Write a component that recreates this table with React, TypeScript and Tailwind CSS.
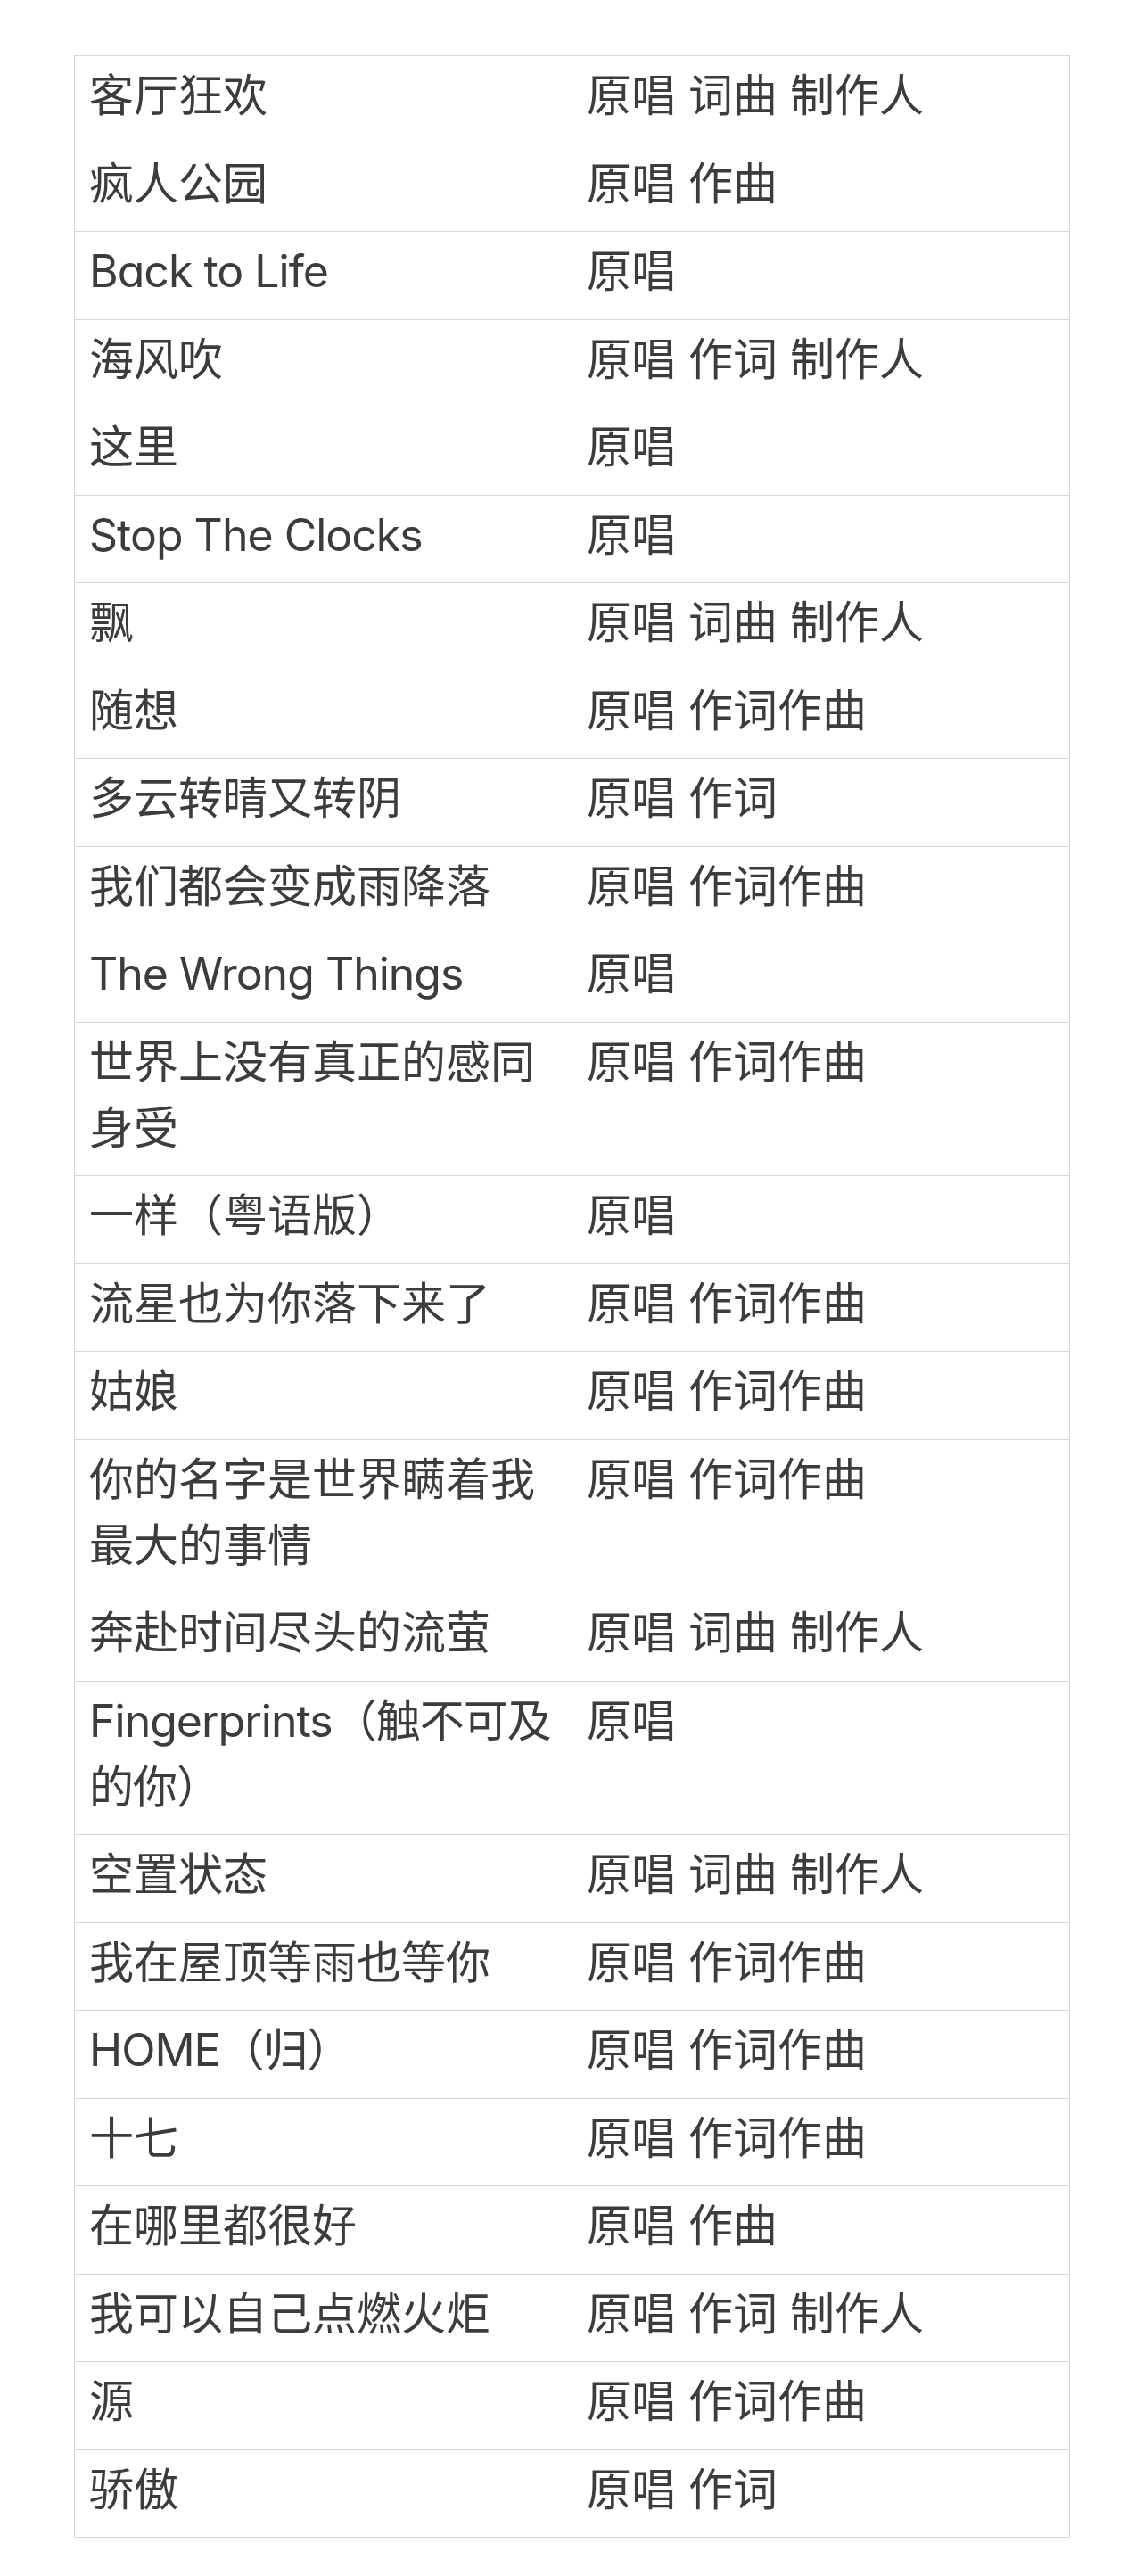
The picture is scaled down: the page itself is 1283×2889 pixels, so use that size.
import React from "react";

const rows: [string, string][] = [
  ["客厅狂欢", "原唱 词曲 制作人"],
  ["疯人公园", "原唱 作曲"],
  ["Back to Life", "原唱"],
  ["海风吹", "原唱 作词 制作人"],
  ["这里", "原唱"],
  ["Stop The Clocks", "原唱"],
  ["飘", "原唱 词曲 制作人"],
  ["随想", "原唱 作词作曲"],
  ["多云转晴又转阴", "原唱 作词"],
  ["我们都会变成雨降落", "原唱 作词作曲"],
  ["The Wrong Things", "原唱"],
  ["世界上没有真正的感同身受", "原唱 作词作曲"],
  ["一样（粤语版）", "原唱"],
  ["流星也为你落下来了", "原唱 作词作曲"],
  ["姑娘", "原唱 作词作曲"],
  ["你的名字是世界瞒着我最大的事情", "原唱 作词作曲"],
  ["奔赴时间尽头的流萤", "原唱 词曲 制作人"],
  ["Fingerprints（触不可及的你）", "原唱"],
  ["空置状态", "原唱 词曲 制作人"],
  ["我在屋顶等雨也等你", "原唱 作词作曲"],
  ["HOME（归）", "原唱 作词作曲"],
  ["十七", "原唱 作词作曲"],
  ["在哪里都很好", "原唱 作曲"],
  ["我可以自己点燃火炬", "原唱 作词 制作人"],
  ["源", "原唱 作词作曲"],
  ["骄傲", "原唱 作词"],
];

const latin = /[A-Za-z]/;

export default function App() {
  return (
    <div className="min-h-[2889px] bg-white pt-[62px] px-[83px] font-['Inter','Noto_Sans_CJK_SC',sans-serif] [font-feature-settings:'cv11'] text-[#3c3c3c]">
      <table className="w-full table-fixed border-collapse border border-[#d6d6d6]">
        <tbody>
          {rows.map(([a, b], i) => (
            <tr key={i}>
              <td
                className={
                  latin.test(a)
                    ? "w-1/2 border border-[#d6d6d6] pl-4 pr-4 pt-[7px] pb-[16.5px] align-top text-[50px] leading-[74px] tracking-[-0.02em]"
                    : "w-1/2 border border-[#d6d6d6] pl-4 pr-4 pt-[7px] pb-[16.5px] align-top text-[50px] leading-[74px]"
                }
              >
                {a}
              </td>
              <td className="w-1/2 border border-[#d6d6d6] pl-4 pr-4 pt-[7px] pb-[16.5px] align-top text-[50px] leading-[74px]">
                {b}
              </td>
            </tr>
          ))}
        </tbody>
      </table>
    </div>
  );
}
